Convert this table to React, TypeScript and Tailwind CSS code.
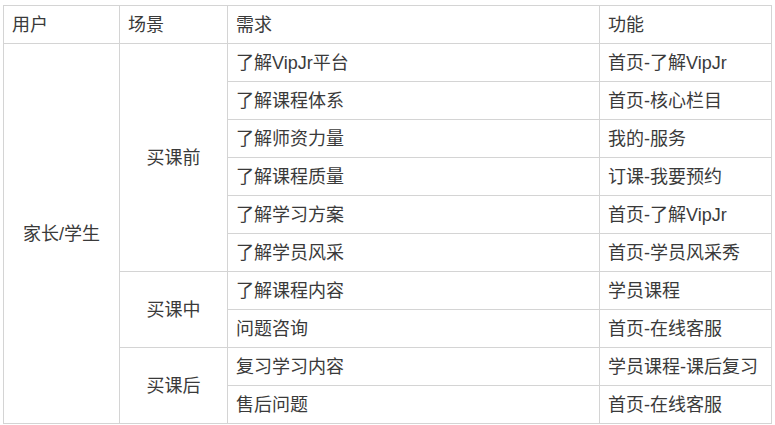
import React from "react";

const font = '"Liberation Sans", "Noto Sans CJK SC", sans-serif';

const rows: { need: string; func: string }[] = [
  { need: "了解VipJr平台", func: "首页-了解VipJr" },
  { need: "了解课程体系", func: "首页-核心栏目" },
  { need: "了解师资力量", func: "我的-服务" },
  { need: "了解课程质量", func: "订课-我要预约" },
  { need: "了解学习方案", func: "首页-了解VipJr" },
  { need: "了解学员风采", func: "首页-学员风采秀" },
  { need: "了解课程内容", func: "学员课程" },
  { need: "问题咨询", func: "首页-在线客服" },
  { need: "复习学习内容", func: "学员课程-课后复习" },
  { need: "售后问题", func: "首页-在线客服" },
];

const scenes: Record<number, { label: string; span: number }> = {
  0: { label: "买课前", span: 6 },
  6: { label: "买课中", span: 2 },
  8: { label: "买课后", span: 2 },
};

const cell = "border border-[#d4d4d4] h-[38px] p-0 px-[8px] align-middle";

export default function App() {
  return (
    <div className="bg-white w-[775px] h-[425px] pt-[5px] pl-[3px]" style={{ fontFamily: font }}>
      <table className="border-collapse table-fixed w-[768px] text-[18px] text-[#3a3a3a] leading-none">
        <colgroup>
          <col className="w-[116px]" />
          <col className="w-[108px]" />
          <col className="w-[372px]" />
          <col className="w-[172px]" />
        </colgroup>
        <thead>
          <tr>
            <th className={`${cell} text-left font-normal`}>用户</th>
            <th className={`${cell} text-left font-normal`}>场景</th>
            <th className={`${cell} text-left font-normal`}>需求</th>
            <th className={`${cell} text-left font-normal`}>功能</th>
          </tr>
        </thead>
        <tbody>
          {rows.map((r, i) => (
            <tr key={i}>
              {i === 0 && (
                <td rowSpan={10} className={`${cell} text-center`}>
                  家长/学生
                </td>
              )}
              {scenes[i] && (
                <td rowSpan={scenes[i].span} className={`${cell} text-center`}>
                  {scenes[i].label}
                </td>
              )}
              <td className={cell}>{r.need}</td>
              <td className={`${cell} whitespace-nowrap`}>{r.func}</td>
            </tr>
          ))}
        </tbody>
      </table>
    </div>
  );
}
